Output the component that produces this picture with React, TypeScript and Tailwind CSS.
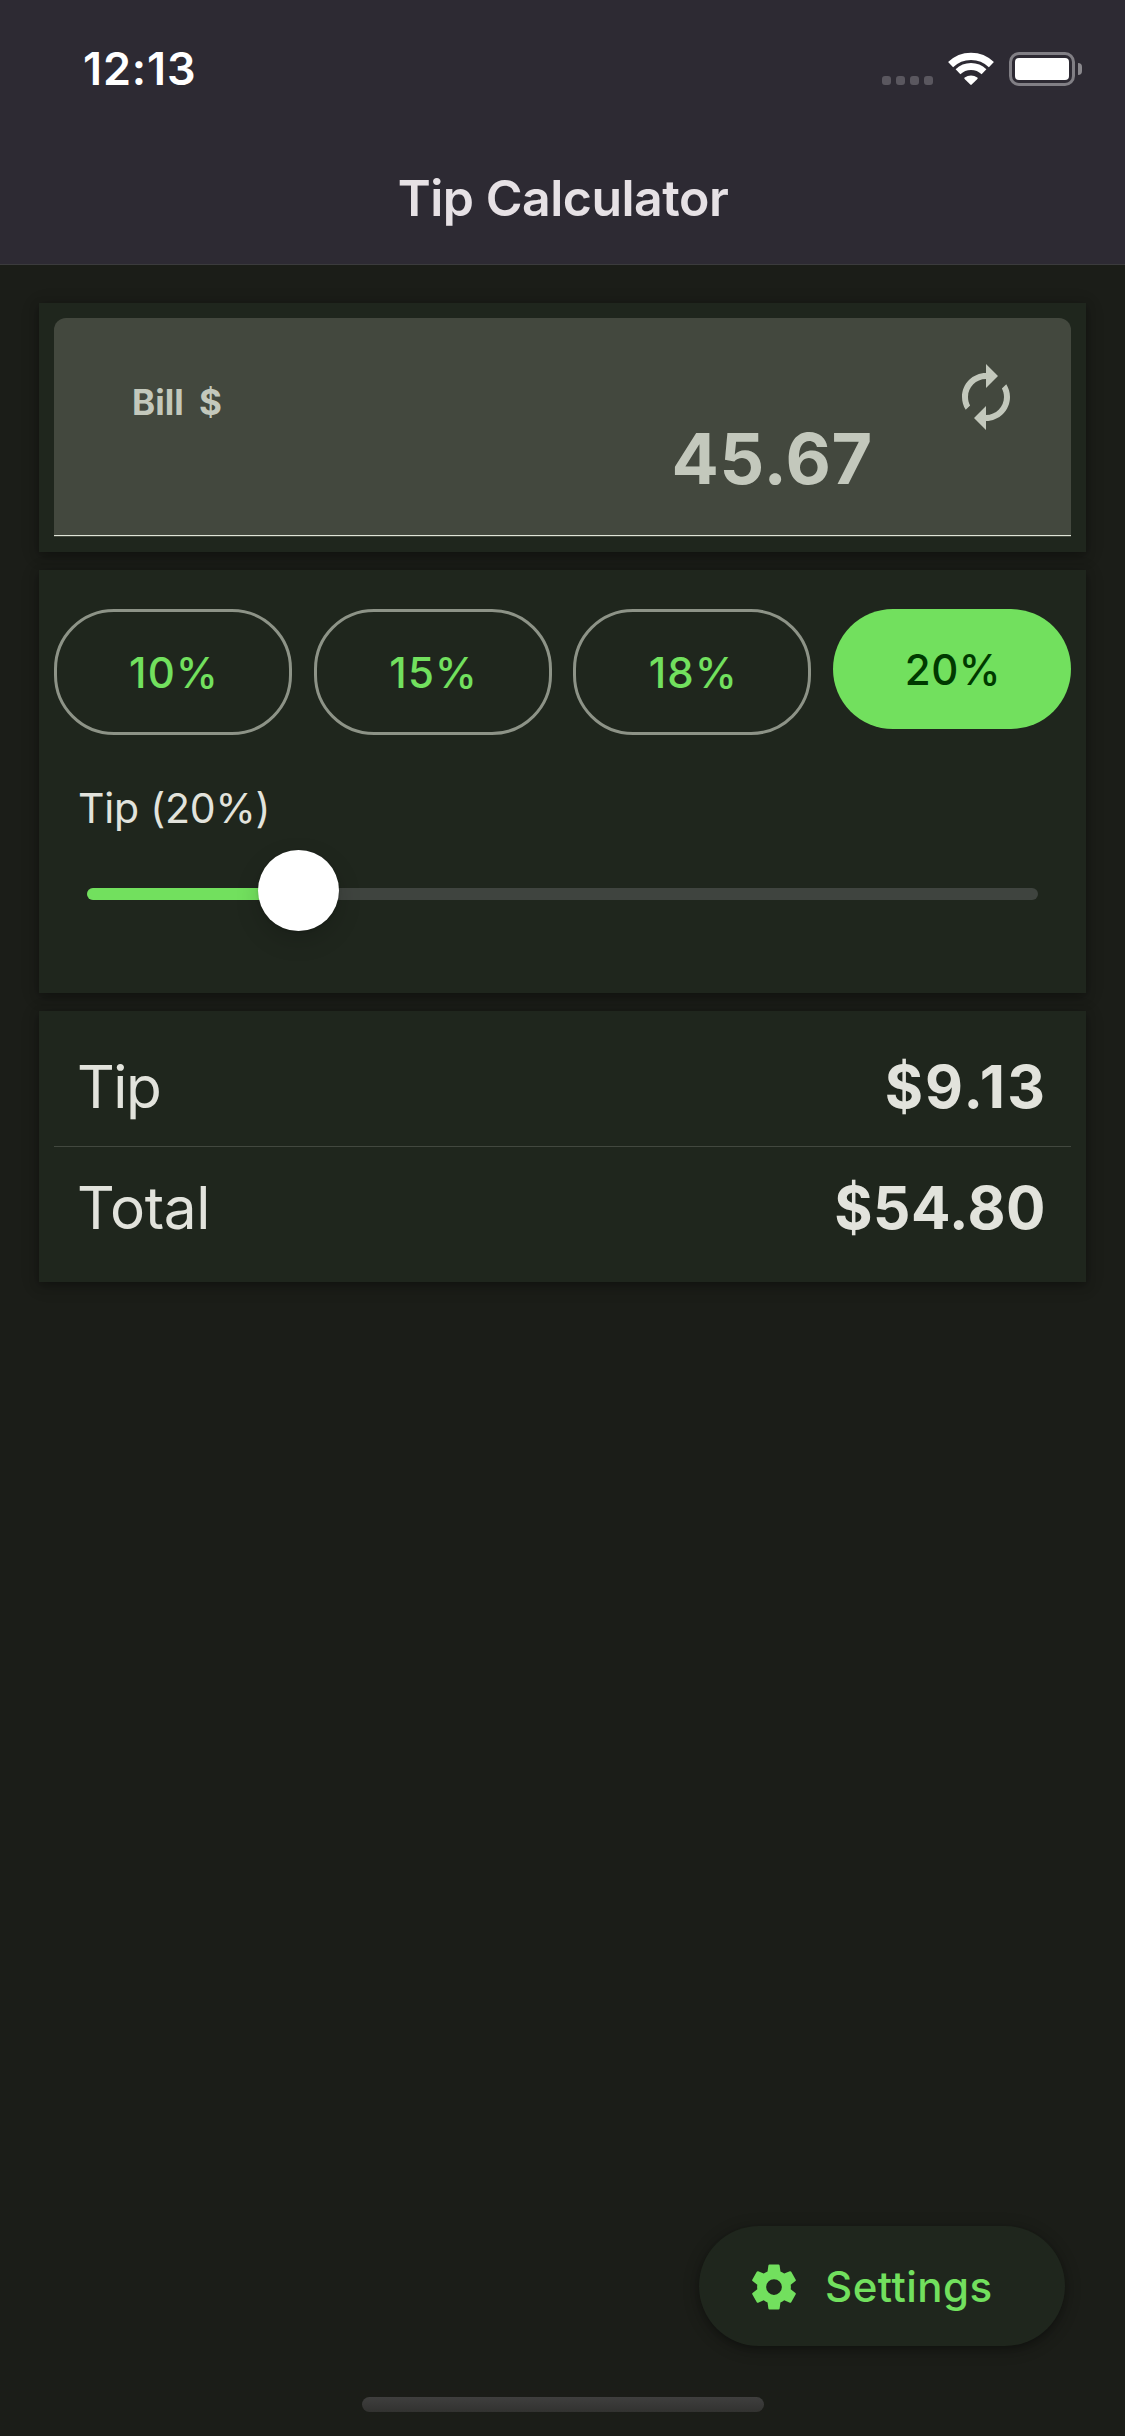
import { useState } from "react";

const PRESETS = [10, 15, 18, 20];
const SLIDER_MIN = 10;

function StatusBar() {
  return (
    <div className="flex h-[132px] items-start justify-between pl-[83px] pr-[43px]">
      <span className="mt-[39px] text-[45px] font-semibold leading-[60px] tracking-[0.9px] text-white">12:13</span>
      <div className="mt-[52px] flex h-[34px] items-start">
        <div className="mt-6 flex gap-[5px]">
          <span className="size-[9px] rounded-[3px] bg-[#5a575f]" />
          <span className="size-[9px] rounded-[3px] bg-[#5a575f]" />
          <span className="size-[9px] rounded-[3px] bg-[#5a575f]" />
          <span className="size-[9px] rounded-[3px] bg-[#5a575f]" />
        </div>
        <svg className="ml-[15px] h-[33px] w-[46px]" viewBox="0 0 46 33" fill="none">
          <path d="M2.6 12.6A29.2 29.2 0 0 1 43.4 12.6" stroke="#fff" strokeWidth="7.2" />
          <path d="M10 19.8A18.6 18.6 0 0 1 36 19.8" stroke="#fff" strokeWidth="6.8" />
          <path d="M22.3 32.6 16.6 26.9Q16 26.2 16.7 25.6A10.2 10.2 0 0 1 29.3 25.6Q30 26.2 29.4 26.9L23.7 32.6Q23 33.2 22.3 32.6Z" fill="#fff" />
        </svg>
        <div className="ml-[15px] flex h-[34px] w-[66px] rounded-[10px] border-[3px] border-[#817f85] p-[3px]">
          <div className="h-full w-full rounded-[4px] bg-white" />
        </div>
        <span className="ml-[3px] mt-[11px] h-3 w-1 rounded-r-full bg-[#8a888d]" />
      </div>
    </div>
  );
}

function Header() {
  return (
    <header className="h-[265px] border-b border-[#3b3b3d] bg-[#2d2a33]">
      <StatusBar />
      <h1 className="pl-px text-center text-[50px] font-semibold leading-[132px] tracking-[-0.5px] text-[#e6e1e5]">
        Tip Calculator
      </h1>
    </header>
  );
}

function Card({ className, children }: { className: string; children: React.ReactNode }) {
  return (
    <section
      className={`bg-[#1f261d] shadow-[0_3px_9px_rgba(0,0,0,0.3),0_3px_18px_rgba(0,0,0,0.15)] ${className}`}
    >
      {children}
    </section>
  );
}

function BillField() {
  return (
    <Card className="h-[249px] p-[15px]">
      <div className="flex h-[219px] flex-col rounded-t-[12px] bg-[#43483e]">
        <div className="flex flex-1 items-start pl-[78px] pr-[49px] text-[#c3c8bc]">
          <label className="mt-[60px] flex text-[35px] font-bold leading-[48px]">
            <span className="w-[67px]">Bill</span>
            <span>$</span>
          </label>
          <span className="mt-[97px] flex-1 pr-[77px] text-right text-[70px] font-bold leading-[88px] tracking-[0.7px]">
            45.67
          </span>
          <svg className="mt-[43px] size-[72px]" viewBox="0 0 24 24" fill="currentColor">
            <path d="M12 6v3l4-4-4-4v3c-4.42 0-8 3.58-8 8 0 1.57.46 3.03 1.24 4.26L6.7 14.8c-.45-.83-.7-1.79-.7-2.8 0-3.31 2.69-6 6-6zm6.76 1.74L17.3 9.2c.44.84.7 1.79.7 2.8 0 3.31-2.69 6-6 6v-3l-4 4 4 4v-3c4.42 0 8-3.58 8-8 0-1.57-.46-3.03-1.24-4.26z" />
          </svg>
        </div>
        <div className="mb-px h-px bg-[#dfe4d7]" />
      </div>
    </Card>
  );
}

function TipPicker({ tip, onPick }: { tip: number; onPick: (value: number) => void }) {
  const travel = ((tip - SLIDER_MIN) / 50) * 868;
  return (
    <Card className="h-[423px] px-[15px] pt-[39px]">
      <div className="grid h-[126px] grid-cols-4 items-start gap-[21.6px]">
        {PRESETS.map((value) => (
          <button
            key={value}
            onClick={() => onPick(value)}
            className={
              value === tip
                ? "h-[120px] rounded-[60px] bg-[#72e05e] pl-0.5 text-[42px] font-medium tracking-[0.5px] text-[#003a00]"
                : "h-[126px] rounded-[60px] border-[3px] border-[#8d9387] pl-0.5 text-[42px] font-medium tracking-[1.2px] text-[#72e05e]"
            }
          >
            {value}%
          </button>
        ))}
      </div>
      <p className="mt-12 pl-6 text-[41px] leading-[50px] tracking-[-0.2px] text-[#e2e3dc]">Tip ({tip}%)</p>
      <div className="relative mx-[33px] mt-[17px] flex h-[87px] items-center">
        <div className="h-3 flex-1 overflow-hidden rounded-full bg-[#3f443f]">
          <div className="h-full bg-[#72e05e]" style={{ width: travel + 38 }} />
        </div>
        <div
          className="absolute top-0 size-[81px] rounded-full bg-white shadow-[0_1px_3px_rgba(0,0,0,0.15),0_9px_24px_rgba(0,0,0,0.16)]"
          style={{ left: travel - 3 }}
        />
      </div>
    </Card>
  );
}

function Totals() {
  return (
    <Card className="h-[271px] px-[15px] pt-[15px] text-[58.5px] text-[#e2e3dc]">
      <div className="flex h-[120px] items-center justify-between px-[23px] pt-0.5">
        <span className="tracking-[-1.5px]">Tip</span>
        <span className="mr-px font-bold tracking-[2.1px]">$9.13</span>
      </div>
      <div className="h-px bg-[#42483f]" />
      <div className="flex h-[120px] items-center justify-between px-[23px] pt-0.5">
        <span className="tracking-[-0.3px]">Total</span>
        <span className="mr-[2px] font-bold tracking-[0.5px]">$54.80</span>
      </div>
    </Card>
  );
}

function SettingsButton() {
  return (
    <button className="flex h-[120px] w-[366px] items-center gap-6 rounded-[60px] bg-[#1f261d] pl-12 text-[#72e05e] shadow-[0_3px_9px_rgba(0,0,0,0.3),0_3px_18px_rgba(0,0,0,0.15)]">
      <svg className="mt-px size-[54px]" viewBox="0 0 24 24" fill="currentColor">
        <path d="M12 15.5A3.5 3.5 0 0 1 8.5 12 3.5 3.5 0 0 1 12 8.5a3.5 3.5 0 0 1 3.5 3.5 3.5 3.5 0 0 1-3.5 3.5m7.43-2.53c.04-.32.07-.64.07-.97s-.03-.66-.07-1l2.11-1.63c.19-.15.24-.42.12-.64l-2-3.46c-.12-.22-.39-.31-.61-.22l-2.49 1c-.52-.39-1.06-.73-1.69-.98l-.37-2.65A.506.506 0 0 0 14 2h-4c-.25 0-.46.18-.5.42l-.37 2.65c-.63.25-1.17.59-1.69.98l-2.49-1c-.22-.09-.49 0-.61.22l-2 3.46c-.13.22-.07.49.12.64L4.57 11c-.04.34-.07.67-.07 1s.03.65.07.97l-2.11 1.66c-.19.15-.25.42-.12.64l2 3.46c.12.22.39.3.61.22l2.49-1.01c.52.4 1.06.74 1.69.99l.37 2.65c.04.24.25.42.5.42h4c.25 0 .46-.18.5-.42l.37-2.65c.63-.26 1.17-.59 1.69-.99l2.49 1.01c.22.08.49 0 .61-.22l2-3.46c.12-.22.07-.49-.12-.64z" />
      </svg>
      <span className="pt-0.5 text-[42px] font-medium leading-[60px] tracking-[0.5px]">Settings</span>
    </button>
  );
}

export default function App() {
  const [tip, setTip] = useState(20);
  return (
    <div className="flex h-[2436px] w-[1125px] flex-col bg-[#1b1d18] font-['Inter','Liberation_Sans',sans-serif]">
      <Header />
      <main className="flex flex-col gap-[18px] px-[39px] pt-[38px]">
        <BillField />
        <TipPicker tip={tip} onPick={setTip} />
        <Totals />
      </main>
      <footer className="mt-auto flex flex-col">
        <div className="flex justify-end pr-[60px]">
          <SettingsButton />
        </div>
        <div className="mx-auto mb-6 mt-[51px] h-[15px] w-[402px] rounded-full bg-linear-to-b from-[#3f3f3e] to-[#323230]" />
      </footer>
    </div>
  );
}
